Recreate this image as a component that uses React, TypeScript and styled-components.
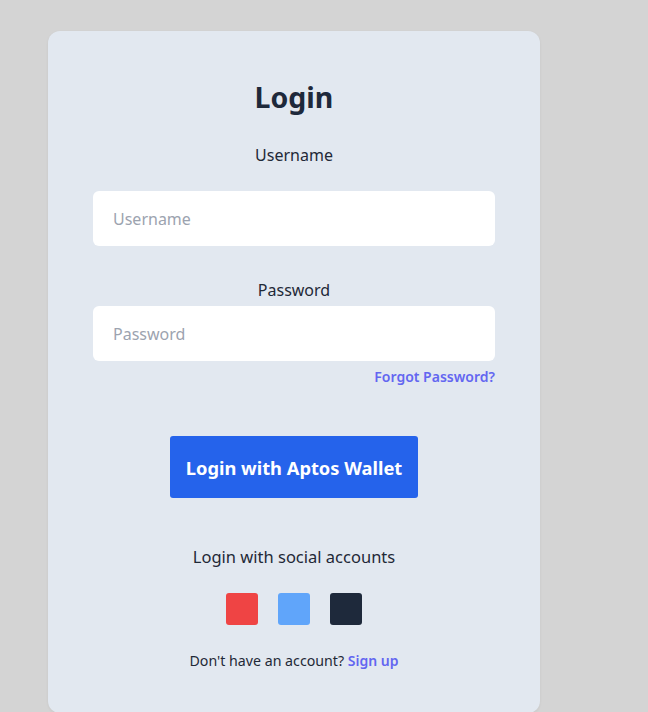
import React from "react";
import styled, { createGlobalStyle } from "styled-components";

const Global = createGlobalStyle`
  html, body { margin: 0; padding: 0; background: #d4d4d4; }
  body { font-family: "Noto Sans", "Open Sans", sans-serif; }
  * { box-sizing: border-box; }
`;

const Page = styled.div`
  min-height: 712px;
  padding: 31px 0 0 48px;
`;

const Card = styled.div`
  width: 492px;
  min-height: 682px;
  background: #e2e8f0;
  border-radius: 12px;
  box-shadow: 0 1px 3px rgba(0, 0, 0, 0.06);
  padding: 48px 45px 40px;
  display: flex;
  flex-direction: column;
  align-items: center;
`;

const Title = styled.h1`
  margin: 0;
  font-size: 28.5px;
  line-height: 36px;
  font-weight: 700;
  color: #1e293b;
`;

const Label = styled.label<{ $mt: number; $mb: number }>`
  display: block;
  margin-top: ${(p) => p.$mt}px;
  margin-bottom: ${(p) => p.$mb}px;
  font-size: 16px;
  line-height: 24px;
  color: #1f2937;
`;

const Input = styled.input`
  width: 100%;
  height: 55px;
  border: none;
  outline: none;
  border-radius: 6px;
  background: #ffffff;
  padding: 0 20px;
  font-family: inherit;
  font-size: 16px;
  color: #1f2937;
  &::placeholder { color: #9ca3af; }
`;

const ForgotRow = styled.div`
  width: 100%;
  display: flex;
  justify-content: flex-end;
  margin-top: 6px;
`;

const Link = styled.a`
  color: #6366f1;
  font-weight: 600;
  font-size: 14px;
  line-height: 20px;
  text-decoration: none;
  cursor: pointer;
`;

const WalletButton = styled.button`
  margin-top: 49px;
  width: 248px;
  height: 62px;
  border: none;
  border-radius: 3px;
  background: #2563eb;
  color: #ffffff;
  font-family: inherit;
  font-weight: 700;
  font-size: 18.3px;
  cursor: pointer;
`;

const SocialLabel = styled.div`
  margin-top: 45px;
  font-size: 16.5px;
  line-height: 28px;
  color: #1f2937;
`;

const SocialRow = styled.div`
  margin-top: 22px;
  display: flex;
  gap: 20px;
`;

const SocialSquare = styled.button<{ $color: string }>`
  width: 32px;
  height: 32px;
  border: none;
  border-radius: 3px;
  background: ${(p) => p.$color};
  padding: 0;
  cursor: pointer;
`;

const Footer = styled.p`
  margin: 26px 0 0;
  font-size: 14.2px;
  line-height: 20px;
  color: #1f2937;
`;

export default function App() {
  return (
    <>
      <Global />
      <Page>
        <Card>
          <Title>Login</Title>
          <Label $mt={28} $mb={24} htmlFor="username">Username</Label>
          <Input id="username" placeholder="Username" />
          <Label $mt={32} $mb={4} htmlFor="password">Password</Label>
          <Input id="password" type="password" placeholder="Password" />
          <ForgotRow>
            <Link>Forgot Password?</Link>
          </ForgotRow>
          <WalletButton>Login with Aptos Wallet</WalletButton>
          <SocialLabel>Login with social accounts</SocialLabel>
          <SocialRow>
            <SocialSquare $color="#ef4444" aria-label="Google" />
            <SocialSquare $color="#60a5fa" aria-label="Twitter" />
            <SocialSquare $color="#1e293b" aria-label="GitHub" />
          </SocialRow>
          <Footer>
            Don't have an account? <Link>Sign up</Link>
          </Footer>
        </Card>
      </Page>
    </>
  );
}
